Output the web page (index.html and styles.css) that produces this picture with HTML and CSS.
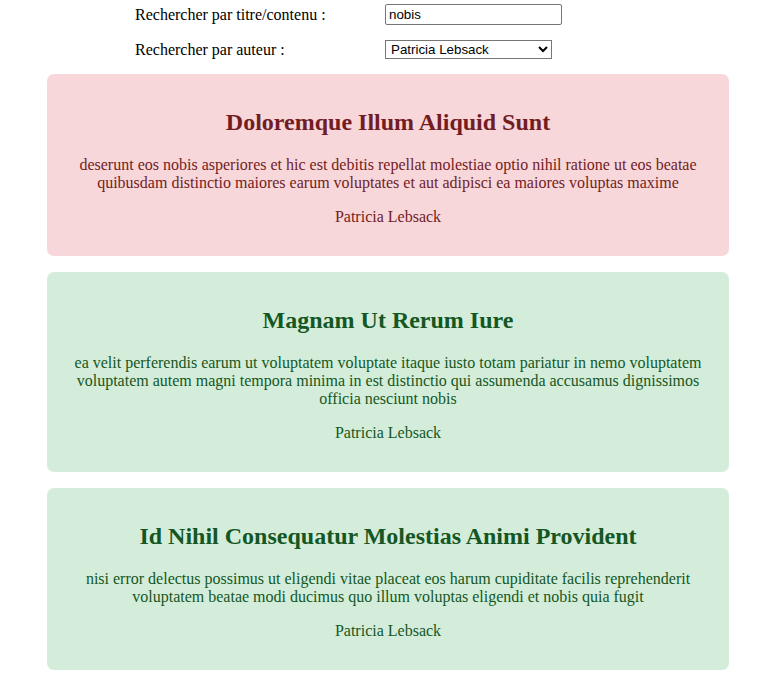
FILE: index.html
```html
<!DOCTYPE html>
<html lang="fr">
<head>
<meta charset="utf-8">
<title>Articles</title>
<link rel="stylesheet" href="styles.css">
</head>
<body>
<div class="page">
  <form class="search">
    <label class="search-label" for="q">Rechercher par titre/contenu :</label>
    <div class="search-field"><input id="q" class="text-input" type="text" value="nobis"></div>
    <label class="search-label" for="author">Rechercher par auteur :</label>
    <div class="search-field">
      <select id="author" class="select-input">
        <option>Patricia Lebsack</option>
      </select>
    </div>
  </form>

  <div class="card card-danger">
    <h2 class="card-title">Doloremque Illum Aliquid Sunt</h2>
    <p class="card-body">deserunt eos nobis asperiores et hic est debitis repellat molestiae optio nihil ratione ut eos beatae quibusdam distinctio maiores earum voluptates et aut adipisci ea maiores voluptas maxime</p>
    <p class="card-author">Patricia Lebsack</p>
  </div>

  <div class="card card-success">
    <h2 class="card-title">Magnam Ut Rerum Iure</h2>
    <p class="card-body">ea velit perferendis earum ut voluptatem voluptate itaque iusto totam pariatur in nemo voluptatem voluptatem autem magni tempora minima in est distinctio qui assumenda accusamus dignissimos officia nesciunt nobis</p>
    <p class="card-author">Patricia Lebsack</p>
  </div>

  <div class="card card-success">
    <h2 class="card-title">Id Nihil Consequatur Molestias Animi Provident</h2>
    <p class="card-body">nisi error delectus possimus ut eligendi vitae placeat eos harum cupiditate facilis reprehenderit voluptatem beatae modi ducimus quo illum voluptas eligendi et nobis quia fugit</p>
    <p class="card-author">Patricia Lebsack</p>
  </div>
</div>
</body>
</html>
```
FILE: styles.css
```css
html, body {
  margin: 0;
  padding: 0;
  background: #ffffff;
}

body {
  font-family: "Liberation Serif", "Times New Roman", serif;
  font-size: 16px;
  color: #000;
}

.page {
  padding: 4px 48px 0 47px;
}

.search {
  display: grid;
  grid-template-columns: 250px auto;
  row-gap: 15px;
  align-items: center;
  padding-left: 88px;
  margin-bottom: 15px;
}

.search-label {
  line-height: 18px;
}

.search-field {
  display: flex;
  align-items: center;
}

.text-input {
  box-sizing: border-box;
  width: 177px;
  height: 21px;
  padding: 1px 3px;
  border: 1px solid #767676;
  border-radius: 2px;
  font-family: "Liberation Sans", Arial, sans-serif;
  font-size: 13.33px;
  color: #000;
  background: #fff;
}

.select-input {
  box-sizing: border-box;
  width: 167px;
  height: 19px;
  padding: 0 0 0 1px;
  border: 1px solid #767676;
  border-radius: 0;
  font-family: "Liberation Sans", Arial, sans-serif;
  font-size: 13.33px;
  color: #000;
  background: #fff;
}

.card {
  border-radius: 7px;
  padding: 15px 20px 14px;
  margin-bottom: 16px;
  text-align: center;
}

.card-danger {
  background: #f8d7da;
  color: #721c24;
}

.card-success {
  background: #d4edda;
  color: #155724;
}

.card-title {
  font-size: 24px;
  font-weight: bold;
  margin: 20px 0;
}

.card-body,
.card-author {
  margin: 16px 0;
}
```
